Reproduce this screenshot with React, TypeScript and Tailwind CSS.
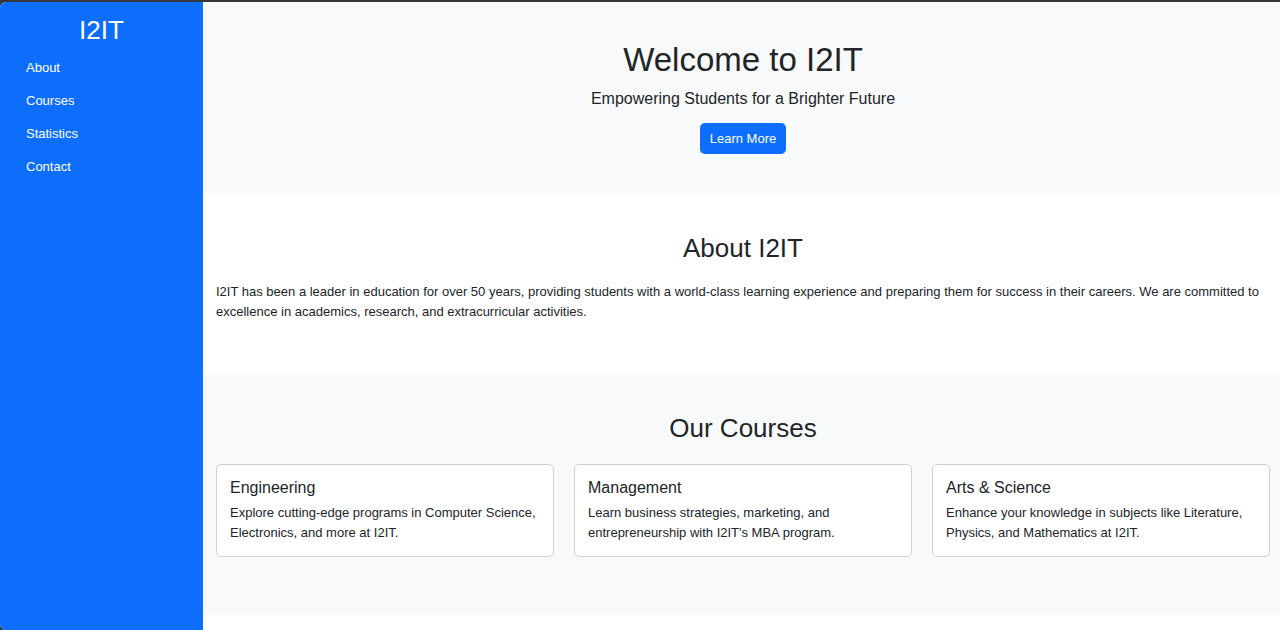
const links = ["About", "Courses", "Statistics", "Contact"];

const courses = [
  {
    title: "Engineering",
    text: "Explore cutting-edge programs in Computer Science, Electronics, and more at I2IT.",
  },
  {
    title: "Management",
    text: "Learn business strategies, marketing, and entrepreneurship with I2IT's MBA program.",
  },
  {
    title: "Arts & Science",
    text: "Enhance your knowledge in subjects like Literature, Physics, and Mathematics at I2IT.",
  },
];

export default function App() {
  return (
    <div className="h-screen overflow-hidden bg-[#35373b] pt-0.5 font-['Liberation_Sans',Arial,sans-serif] text-[13px] leading-5 text-[#212529]">
      <div className="flex h-full overflow-hidden rounded-l-md bg-white">
        <nav className="w-[203px] shrink-0 bg-[#0d6efd] px-[13px] pt-3 text-white">
          <h2 className="text-center text-[26px] leading-8">I2IT</h2>
          <ul className="mt-[5px]">
            {links.map((name) => (
              <li key={name}>
                <a href={`#${name.toLowerCase()}`} className="block px-[13px] py-1.5 leading-[21px]">
                  {name}
                </a>
              </li>
            ))}
          </ul>
        </nav>
        <main className="min-w-0 flex-1 overflow-hidden">
          <header className="bg-[#f8f9fa] pt-[38px] pr-2.5 pb-[39px] pl-[13px] text-center">
            <h1 className="text-[33px] leading-10">Welcome to I2IT</h1>
            <p className="mt-[7px] text-[16px] leading-6">Empowering Students for a Brighter Future</p>
            <button type="button" className="mt-3 rounded-[5px] bg-[#0d6efd] px-2.5 py-[5px] text-[13px] leading-[21px] text-white">
              Learn More
            </button>
          </header>
          <section id="about" className="pt-[39px] pr-2.5 pb-[53px] pl-[13px]">
            <h2 className="text-center text-[26px] leading-8">About I2IT</h2>
            <p className="mt-[18px]">
              I2IT has been a leader in education for over 50 years, providing students with a world-class learning
              experience and preparing them for success in their careers. We are committed to excellence in academics,
              research, and extracurricular activities.
            </p>
          </section>
          <section id="courses" className="bg-[#f8f9fa] pt-[37px] pr-2.5 pb-[58px] pl-[13px]">
            <h2 className="text-center text-[26px] leading-8">Our Courses</h2>
            <div className="mt-5 grid grid-cols-3 gap-5">
              {courses.map((course) => (
                <article key={course.title} className="rounded-[5px] border border-[#d0d1d2] bg-white px-[13px] pt-3 pb-[13px]">
                  <h3 className="text-[16px] leading-[22px]">{course.title}</h3>
                  <p className="mt-1">{course.text}</p>
                </article>
              ))}
            </div>
          </section>
        </main>
      </div>
    </div>
  );
}
